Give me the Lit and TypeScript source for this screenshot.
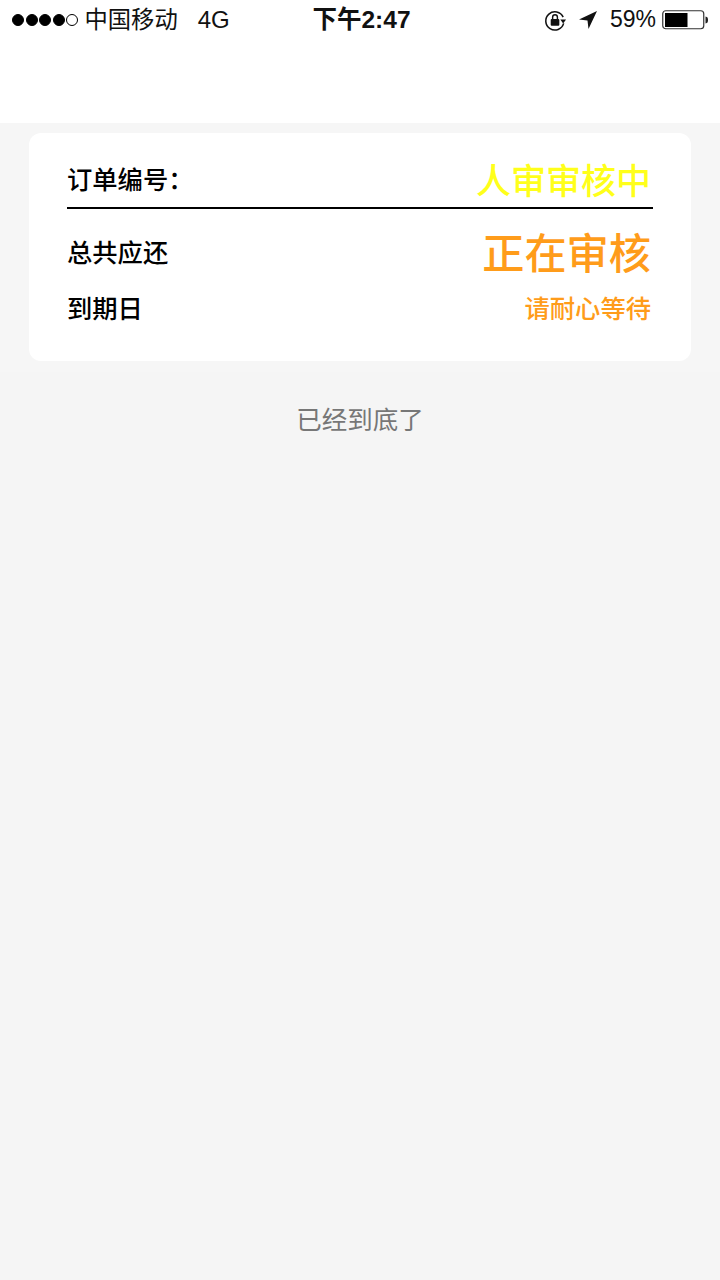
import { LitElement, html, css } from "lit";
import { customElement } from "lit/decorators.js";

@customElement("app-root")
export class AppRoot extends LitElement {
  static styles = css`
    :host { display: block; width: 720px; height: 1280px; background: #f5f5f5; font-family: "Liberation Sans", "Noto Sans CJK SC", sans-serif; overflow: hidden; }
    .top { height: 123px; background: #fff; }
    .status { height: 40px; display: flex; align-items: center; justify-content: space-between; padding: 0 12px 0 12px; font-size: 23px; color: #111; position: relative; }
    .left, .right { display: flex; align-items: center; }
    .dots { display: flex; gap: 1.5px; margin-right: 6.5px; }
    .dot { width: 12px; height: 12px; border-radius: 50%; background: #000; box-sizing: border-box; border: 1px solid #000; }
    .dot.off { background: #fff; }
    .carrier { padding-bottom: 5px; font-size: 23.3px; }
    .net { margin-left: 20px; padding-bottom: 1px; font-size: 24px; }
    .clock { position: absolute; left: 0; right: 0; top: 0; height: 40px; box-sizing: border-box; padding: 0 0 5px 3px; display: flex; align-items: center; justify-content: center; font-weight: 700; font-size: 24.5px; }
    .right svg { display: block; }
    .lock { margin-right: 11px; width: 23px; height: 23px; }
    .pct { margin: 0 6px 0 12px; padding-bottom: 1px; }
    .band { padding: 10px 29px 11px; background: #f6f6f6; }
    .card { height: 228px; box-sizing: border-box; background: #fff; border-radius: 12px; padding: 26px 38px 0; font-family: "Noto Sans CJK SC", sans-serif; color: #000; font-weight: 500; }
    .row { display: flex; justify-content: space-between; align-items: center; padding-right: 2px; font-size: 25.3px; }
    .r1 { height: 50px; border-bottom: 2px solid #000; width: 586px; box-sizing: border-box; padding-bottom: 10px; }
    .r1 .v { font-size: 35px; color: #ffff1a; }
    .r2 { height: 84px; }
    .r2 .v { font-size: 42.2px; color: #ff9c1a; padding-bottom: 1px; }
    .r3 { height: 28px; }
    .r3 .v { color: #ff9c1a; }
    .end { text-align: center; font-size: 25.5px; color: #777; font-family: "Noto Sans CJK SC", sans-serif; margin-top: 27px; }
  `;
  render() {
    return html`
      <div class="top">
        <div class="status">
          <div class="left">
            <div class="dots">
              <span class="dot"></span><span class="dot"></span><span class="dot"></span><span class="dot"></span><span class="dot off"></span>
            </div>
            <span class="carrier">中国移动</span><span class="net">4G</span>
          </div>
          <div class="clock">下午2:47</div>
          <div class="right">
            <svg class="lock" viewBox="0 0 24 24" fill="none">
              <path d="M20 8.5A9.5 9.5 0 1 0 20.5 15" stroke="#111" stroke-width="1.6"/>
              <path d="M17 11h6l-3 4z" fill="#111"/>
              <rect x="7" y="10.5" width="9" height="7" rx="1" fill="#111"/>
              <path d="M9 11V8.5a2.5 2.5 0 0 1 5 0V11" stroke="#111" stroke-width="1.5"/>
            </svg>
            <svg width="20" height="20" viewBox="0 0 20 20"><path d="M19 1L1 9.5l8.5 1 1 8.5z" fill="#111"/></svg>
            <span class="pct">59%</span>
            <svg width="46" height="20" viewBox="0 0 46 20" fill="none">
              <rect x="0.75" y="0.75" width="41" height="18" rx="3" stroke="#333" stroke-width="1.2"/>
              <rect x="3" y="3" width="22.5" height="14" fill="#000"/>
              <path d="M43.5 6.5c2 .3 2.5 1.5 2.5 3.5s-.5 3.2-2.5 3.5z" fill="#222"/>
            </svg>
          </div>
        </div>
      </div>
      <div class="band">
        <div class="card">
          <div class="row r1"><span>订单编号：</span><span class="v">人审审核中</span></div>
          <div class="row r2"><span>总共应还</span><span class="v">正在审核</span></div>
          <div class="row r3"><span>到期日</span><span class="v">请耐心等待</span></div>
        </div>
      </div>
      <div class="end">已经到底了</div>
    `;
  }
}
